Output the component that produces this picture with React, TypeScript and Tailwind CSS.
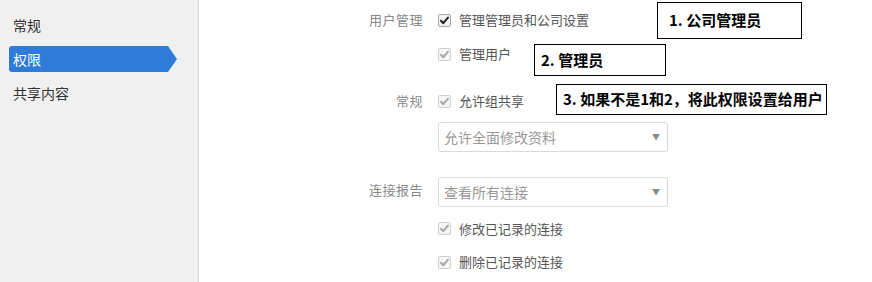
import React from 'react'

const FONT = '"Noto Sans CJK SC", "Noto Sans", sans-serif'

function CheckBox({ enabled = false }: { enabled?: boolean }) {
  return (
    <svg width="13" height="13" viewBox="0 0 13 13" className="shrink-0">
      <rect x="0.5" y="0.5" width="12" height="12" rx="1.5" fill={enabled ? '#f4f4f4' : '#f6f6f6'} stroke={enabled ? '#a8a8a8' : '#d0d0d0'} />
      <path
        d="M3 6.8 L5.3 9.2 L10 3.6"
        fill="none"
        stroke={enabled ? '#222' : '#a8a8a8'}
        strokeWidth="2"
        strokeLinecap="round"
        strokeLinejoin="round"
      />
    </svg>
  )
}

function CheckRow({ label, enabled = false, className = 'h-[34px]' }: { label: string; enabled?: boolean; className?: string }) {
  return (
    <div className={`flex items-center gap-[8px] ${className}`}>
      <CheckBox enabled={enabled} />
      <span className="text-[13px] text-[#555]">{label}</span>
    </div>
  )
}

function Select({ value }: { value: string }) {
  return (
    <div className="flex h-[30px] w-[230px] items-center justify-between rounded-[3px] border border-[#d9d9d9] bg-white pl-[5px] pr-[7px]">
      <span className="text-[14px] text-[#999]">{value}</span>
      <span className="text-[8px] text-[#888]">▼</span>
    </div>
  )
}

function Label({ text, className = 'h-[34px]' }: { text: string; className?: string }) {
  return (
    <div className={`flex w-[84px] shrink-0 items-center justify-end text-[13px] tracking-[0.5px] text-[#888] ${className}`}>
      {text}
    </div>
  )
}

function Note({ text, className }: { text: string; className: string }) {
  return (
    <div
      className={`absolute flex items-center border border-black bg-white text-[15px] font-bold text-black ${className}`}
    >
      {text}
    </div>
  )
}

export default function App() {
  const navItems = ['常规', '权限', '共享内容']

  return (
    <div className="relative flex h-[282px] w-[872px] overflow-hidden bg-white" style={{ fontFamily: FONT }}>
      {/* Sidebar */}
      <div className="flex w-[199px] shrink-0 flex-col gap-[8px] border-r border-[#d2d2d2] bg-[#f0f0f0] pt-[12px]">
        {navItems.map((item) =>
          item === '权限' ? (
            <div key={item} className="ml-[9px] flex h-[26px]">
              <div className="flex w-[159px] items-center rounded-l-[3px] bg-[#2e7cd8] pl-[4px] text-[14px] text-white">
                {item}
              </div>
              <div className="h-0 w-0 border-y-[13px] border-l-[9px] border-y-transparent border-l-[#2e7cd8]" />
            </div>
          ) : (
            <div key={item} className="flex h-[26px] items-center pl-[13px] text-[14px] text-[#333]">
              {item}
            </div>
          )
        )}
      </div>

      {/* Main form */}
      <div className="flex flex-col pl-[140px] pt-[3px]">
        <div className="flex gap-[15px]">
          <Label text="用户管理" />
          <div className="flex flex-col">
            <CheckRow label="管理管理员和公司设置" enabled />
            <CheckRow label="管理用户" />
          </div>
        </div>

        <div className="mt-[13px] flex gap-[15px]">
          <Label text="常规" />
          <div className="flex flex-col">
            <CheckRow label="允许组共享" />
            <div className="mt-[4px]">
              <Select value="允许全面修改资料" />
            </div>
          </div>
        </div>

        <div className="mt-[25px] flex gap-[15px]">
          <Label text="连接报告" className="h-[30px] pb-[5px]" />
          <div className="flex flex-col">
            <Select value="查看所有连接" />
            <CheckRow label="修改已记录的连接" className="mt-[5px] h-[33px]" />
            <CheckRow label="删除已记录的连接" />
          </div>
        </div>
      </div>

      {/* Annotations */}
      <Note text="1. 公司管理员" className="left-[657px] top-[2px] h-[37px] w-[145px] pl-[11px]" />
      <Note text="2. 管理员" className="left-[534px] top-[44px] h-[32px] w-[132px] pl-[6px]" />
      <Note text="3. 如果不是1和2，将此权限设置给用户" className="left-[556px] top-[84px] h-[31px] w-[271px] pl-[6px]" />
    </div>
  )
}
